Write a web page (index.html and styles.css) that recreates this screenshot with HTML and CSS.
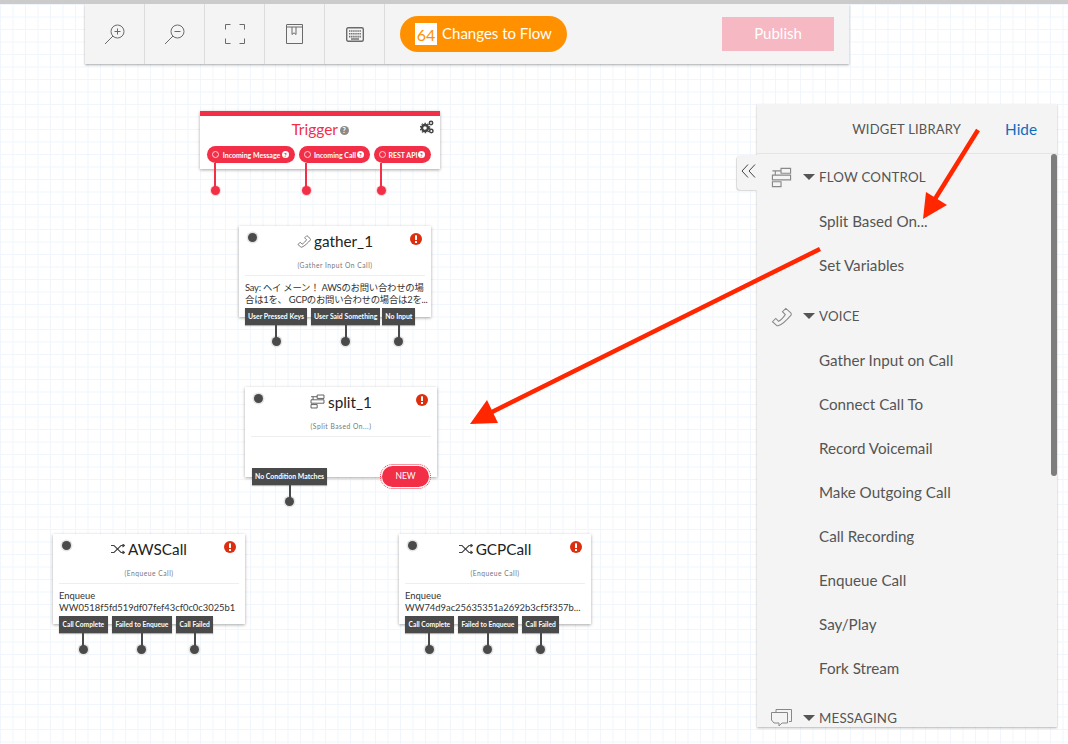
FILE: index.html
```html
<!DOCTYPE html>
<html lang="en">
<head>
<meta charset="utf-8">
<title>Studio Flow</title>
<link rel="stylesheet" href="styles.css">
</head>
<body>
<svg width="0" height="0" class="defs">
  <symbol id="i-split" viewBox="0 0 22 22"><path d="M10.500 1.500h10v5h-10zM1.500 8.500h19v5h-19zM1.500 15.500h9v5h-9zM1.500 4h9M4.500 4v4.500" fill="none" stroke="currentColor" stroke-width="1.200"/></symbol>
  <symbol id="i-phone" viewBox="0 0 22 22"><path d="M1.500 16.500l3.500-3.500 3 3c2-1 6-5 7-7l-3-3 3.500-3.500 5 4.500c1 1 1 1.500.5 2.500C18 13 12 19 8 20.500c-1 .5-1.500.5-2.500-.5z" fill="none" stroke="currentColor" stroke-width="1.100"/></symbol>
  <symbol id="i-shuffle" viewBox="0 0 14 10"><path d="M0 1.500h3l7 7h3M0 8.500h3l7-7h3M11.500 0l2 1.500-2 1.500M11.500 7l2 1.500-2 1.500" fill="none" stroke="currentColor" stroke-width="1.100"/></symbol>
  <symbol id="i-alert" viewBox="0 0 12 12"><circle cx="6" cy="6" r="6" fill="#dd2e0e"/><rect x="5" y="2.300" width="2" height="4.700" fill="#fff"/><rect x="5" y="8" width="2" height="2" fill="#fff"/></symbol>
</svg>

<main class="canvas">
  <header class="toolbar">
    <div class="tool">
      <svg width="22" height="22" viewBox="0 0 22 22" class="tool-icon"><circle cx="13.500" cy="8.500" r="6.500"/><path d="M9 13L1 21M10.500 8.500h6M13.500 5.500v6"/></svg>
    </div>
    <div class="tool">
      <svg width="22" height="22" viewBox="0 0 22 22" class="tool-icon"><circle cx="13.500" cy="8.500" r="6.500"/><path d="M9 13L1 21M10.500 8.500h6"/></svg>
    </div>
    <div class="tool">
      <svg width="20" height="20" viewBox="0 0 20 20" class="tool-icon"><path d="M.5 5.500v-5h5M14.500.5h5v5M.5 14.500v5h5M14.500 19.500h5v-5"/></svg>
    </div>
    <div class="tool">
      <svg width="17" height="20" viewBox="0 0 17 20" class="tool-icon"><path d="M.5 3v16.500h16V3zM.5 3V1q0-.5.5-.5h15.500V3M10 3v7.500l-2-1.700-2 1.700V3"/></svg>
    </div>
    <div class="tool">
      <svg width="18" height="15" viewBox="0 0 18 15" class="tool-icon"><rect x=".7" y=".7" width="16.600" height="13.600" rx="1.500" stroke-width="1.400"/><path class="keys" d="M3 4h12M3 6.800h12M3 9.600h12" stroke-width="1.600" stroke-dasharray="1.400 .7"/><path d="M5 12h8" stroke-width="1.400"/></svg>
    </div>
    <div class="toolbar-actions">
      <button class="changes"><span class="changes-count">64</span>Changes to Flow</button>
      <button class="publish">Publish</button>
    </div>
  </header>

  <section class="node node-trigger">
    <h2 class="trigger-title">Trigger <span class="help help-title">?</span></h2>
    <svg class="gears" width="14" height="14" viewBox="0 0 14 14"><circle cx="5" cy="8" r="3" fill="none" stroke="#444" stroke-width="2.400"/><circle cx="5" cy="8" r="4.700" fill="none" stroke="#444" stroke-width="1.300" stroke-dasharray="1.500 1.500"/><circle cx="11" cy="3" r="1.700" fill="none" stroke="#444" stroke-width="1.500"/><circle cx="11.300" cy="11" r="1.700" fill="none" stroke="#444" stroke-width="1.500"/></svg>
    <div class="pills">
      <div class="pill pill-a"><i class="ring"></i>Incoming Message <span class="help">?</span></div>
      <div class="pill pill-b"><i class="ring"></i>Incoming Call <span class="help">?</span></div>
      <div class="pill pill-c"><i class="ring"></i>REST API <span class="help">?</span></div>
    </div>
  </section>

  <section class="node widget node-gather">
    <i class="in-dot"></i>
    <svg class="alert" width="12" height="12"><use href="#i-alert"/></svg>
    <h3 class="widget-title"><svg class="title-icon" width="14" height="14"><use href="#i-phone"/></svg>gather_1</h3>
    <p class="widget-sub">(Gather Input On Call)</p>
    <p class="widget-body widget-body-ja">Say: ヘイ メーン！ AWSのお問い合わせの場<br>合は1を、 GCPのお問い合わせの場合は2を...</p>
    <div class="ports ports-gather">
      <span class="port">User Pressed Keys</span>
      <span class="port">User Said Something</span>
      <span class="port">No Input</span>
    </div>
  </section>

  <section class="node widget node-split">
    <i class="in-dot"></i>
    <svg class="alert" width="12" height="12"><use href="#i-alert"/></svg>
    <h3 class="widget-title"><svg class="title-icon" width="15" height="15"><use href="#i-split"/></svg>split_1</h3>
    <p class="widget-sub">(Split Based On...)</p>
    <div class="ports">
      <span class="port">No Condition Matches</span>
    </div>
    <span class="new-btn">NEW</span>
  </section>

  <section class="node widget node-aws">
    <i class="in-dot"></i>
    <svg class="alert" width="12" height="12"><use href="#i-alert"/></svg>
    <h3 class="widget-title"><svg class="title-icon" width="14" height="10"><use href="#i-shuffle"/></svg>AWSCall</h3>
    <p class="widget-sub">(Enqueue Call)</p>
    <p class="widget-body">Enqueue<br>WW0518f5fd519df07fef43cf0c0c3025b1</p>
    <div class="ports">
      <span class="port">Call Complete</span>
      <span class="port">Failed to Enqueue</span>
      <span class="port">Call Failed</span>
    </div>
  </section>

  <section class="node widget node-gcp">
    <i class="in-dot"></i>
    <svg class="alert" width="12" height="12"><use href="#i-alert"/></svg>
    <h3 class="widget-title"><svg class="title-icon" width="14" height="10"><use href="#i-shuffle"/></svg>GCPCall</h3>
    <p class="widget-sub">(Enqueue Call)</p>
    <p class="widget-body">Enqueue<br>WW74d9ac25635351a2692b3cf5f357b...</p>
    <div class="ports">
      <span class="port">Call Complete</span>
      <span class="port">Failed to Enqueue</span>
      <span class="port">Call Failed</span>
    </div>
  </section>

  <aside class="library">
    <button class="collapse">
      <svg width="15" height="14" viewBox="0 0 15 14" fill="none" stroke="#444" stroke-width="1"><path d="M7 .5L1 7l6 6.500M14 .5L8 7l6 6.500"/></svg>
    </button>
    <div class="library-head">
      <span class="library-title">WIDGET LIBRARY</span>
      <a class="hide-link">Hide</a>
    </div>
    <div class="library-body">
      <div class="group-row">
        <svg class="group-icon" width="21" height="21"><use href="#i-split"/></svg>
        <i class="caret"></i><span>FLOW CONTROL</span>
      </div>
      <div class="item">Split Based On...</div>
      <div class="item">Set Variables</div>
      <div class="group-row group-next">
        <svg class="group-icon" width="21" height="21"><use href="#i-phone"/></svg>
        <i class="caret"></i><span>VOICE</span>
      </div>
      <div class="item">Gather Input on Call</div>
      <div class="item">Connect Call To</div>
      <div class="item">Record Voicemail</div>
      <div class="item">Make Outgoing Call</div>
      <div class="item">Call Recording</div>
      <div class="item">Enqueue Call</div>
      <div class="item">Say/Play</div>
      <div class="item">Fork Stream</div>
      <div class="group-row group-next group-last">
        <svg class="group-icon" width="21" height="18" viewBox="0 0 21 18" fill="none" stroke="currentColor"><path d="M5 3V.5h15.500v12H18M.5 3.500h16v10.500H11l-3 3v-3H3L.5 11z"/></svg>
        <i class="caret"></i><span>MESSAGING</span>
      </div>
    </div>
    <div class="scrollbar"></div>
  </aside>

  <svg class="annotations" width="1068" height="744" viewBox="0 0 1068 744">
    <path d="M978 130L935 199" stroke="#ff2600" stroke-width="4.500" fill="none"/>
    <path d="M923 219L926 192L947 205Z" fill="#ff2600"/>
    <path d="M820 249L492 412" stroke="#ff2600" stroke-width="4.500" fill="none"/>
    <path d="M470 424L487 400L498 423Z" fill="#ff2600"/>
  </svg>
</main>
</body>
</html>
```
FILE: styles.css
```css
* { box-sizing: border-box; }
html, body { margin: 0; padding: 0; }
body { font-family: "Lato", "Noto Sans CJK JP", sans-serif; overflow: hidden; }
.defs { position: absolute; }

.canvas {
  position: relative;
  width: 1068px;
  height: 744px;
  overflow: hidden;
  background-color: #fff;
  background-image:
    linear-gradient(#f0f6fb 1px, transparent 1px),
    linear-gradient(90deg, #f0f6fb 1px, transparent 1px);
  background-size: 12.500px 12.500px;
  border-top: 4px solid #cbcbcb;
}

/* Toolbar */
.toolbar {
  position: absolute;
  left: 85px;
  top: 0;
  width: 764px;
  height: 60px;
  display: flex;
  background: #f4f4f4;
  box-shadow: 0 1px 2px rgba(0,0,0,.35);
}
.tool {
  width: 60px;
  display: flex;
  align-items: center;
  justify-content: center;
  border-right: 1px solid #dcdcdc;
}
.tool-icon { fill: none; stroke: #6a6a6a; stroke-width: 1; }
.toolbar-actions {
  flex: 1;
  display: flex;
  align-items: center;
  justify-content: space-between;
  padding: 0 15px;
}
.changes {
  width: 167px;
  height: 36px;
  border: 0;
  border-radius: 18px;
  background: #ff9100;
  color: #fff;
  font: 15px "Lato", sans-serif;
  display: flex;
  align-items: center;
  gap: 5px;
  padding: 0 0 2px 15px;
}
.changes-count {
  width: 22px;
  height: 22px;
  margin-top: 2px;
  background: #fff;
  color: #ff9100;
  font-size: 16px;
  display: flex;
  align-items: center;
  justify-content: center;
}
.publish {
  width: 112px;
  height: 34px;
  padding: 0 0 2px;
  border: 0;
  background: #f6b8c3;
  color: #fff;
  font: 15px "Lato", sans-serif;
}

/* Nodes */
.node {
  position: absolute;
  background: #fff;
  box-shadow: 0 1px 3px rgba(0,0,0,.35);
}
.node-trigger { left: 200px; top: 107px; width: 240px; height: 58px; border-top: 5px solid #f22f46; text-align: center; }
.node-gather { left: 239px; top: 222px; height: 91px; }
.node-split { left: 245px; top: 383px; height: 90px; width: 193px; }
.node-aws { left: 53px; top: 530px; height: 90px; }
.node-gcp { left: 399px; top: 530px; height: 90px; width: 193px; }

.trigger-title {
  margin: 4px 0 0;
  font-size: 15.500px;
  font-weight: 400;
  line-height: 18px;
  color: #f22f46;
}
.help {
  display: inline-block;
  width: 7px;
  height: 7px;
  border-radius: 50%;
  background: #fff;
  color: #f22f46;
  font-size: 6px;
  font-weight: 900;
  line-height: 7px;
  text-align: center;
  vertical-align: 1px;
}
.help-title { width: 9px; height: 9px; margin-left: -2px; background: #8a8a8a; color: #fff; font-size: 7px; line-height: 9px; vertical-align: 2px; }
.gears { position: absolute; right: 6px; top: 4px; }
.pills { position: absolute; left: 0; top: 30px; width: 100%; height: 17px; }
.pill {
  position: absolute;
  top: 0;
  height: 17px;
  display: flex;
  align-items: center;
  justify-content: space-between;
  padding: 0 5px 0 5px;
  background: #f22f46;
  border-radius: 9px;
  color: #fff;
  font-size: 7px;
  font-weight: 700;
  white-space: nowrap;
}
.pill::after {
  content: "";
  position: absolute;
  left: 7px;
  top: 17px;
  width: 2px;
  height: 24px;
  background: #f22f46;
}
.pill::before {
  content: "";
  position: absolute;
  left: 3.500px;
  top: 40px;
  width: 9px;
  height: 9px;
  border-radius: 50%;
  background: #f22f46;
  box-shadow: 0 0 0 1px #fbd5da;
}
.pill-b::after { left: 6px; }
.pill-b::before { left: 2.500px; }
.pill-c::after { left: 6px; }
.pill-c::before { left: 2.500px; }
.ring { width: 7px; height: 7px; border: 1px solid #fbd5da; border-radius: 50%; margin-right: 2px; }
.pill-a { left: 7px; width: 88px; padding-right: 6px; padding-left: 5px; }
.pill-b { left: 99px; width: 71px; padding-right: 6px; }
.pill-c { left: 174px; width: 57px; padding-right: 6px; }

.widget { width: 192px; padding: 0 6px; text-align: center; }
.in-dot {
  position: absolute;
  left: 9px;
  top: 7px;
  width: 9px;
  height: 9px;
  border-radius: 50%;
  background: #4a4a4a;
  box-shadow: 0 0 0 1.500px #e4e4e4;
}
.alert { position: absolute; right: 9px; top: 7px; }
.widget-title {
  margin: 0;
  height: 30px;
  padding-bottom: 1px;
  font-size: 15.300px;
  font-weight: 400;
  line-height: 28px;
  color: #222;
  display: flex;
  align-items: center;
  justify-content: center;
  gap: 3px;
}
.title-icon { color: #444; }
.widget-sub {
  margin: 0;
  height: 20px;
  padding-top: 4px;
  font-size: 6.700px;
  line-height: 10px;
  letter-spacing: .5px;
  color: #777;
  border-bottom: 1px solid #eee;
}
.widget-body {
  margin: 0;
  padding-top: 6px;
  font-size: 9.400px;
  line-height: 12px;
  text-align: left;
  color: #333;
  white-space: nowrap;
}
.widget-body-ja { letter-spacing: -.25px; }
.ports {
  position: absolute;
  left: 6px;
  top: 82px;
  display: flex;
  gap: 4px;
}
.ports-gather .port + .port + .port { margin-left: -2px; }
.node-split .ports { left: 7px; top: 81px; }
.port {
  position: relative;
  display: block;
  height: 17px;
  padding: 0 3px;
  background: #4a4a4a;
  box-shadow: 0 1px 1px rgba(0,0,0,.3);
  color: #fff;
  font-size: 6.900px;
  font-weight: 700;
  line-height: 17px;
  white-space: nowrap;
}
.port::after {
  content: "";
  position: absolute;
  left: calc(50% - 1px);
  top: 17px;
  width: 2px;
  height: 15px;
  background: #4a4a4a;
}
.port::before {
  content: "";
  position: absolute;
  left: calc(50% - 4.500px);
  top: 29px;
  width: 9px;
  height: 9px;
  border-radius: 50%;
  background: #4a4a4a;
  box-shadow: 0 0 0 1.500px #e4e4e4;
}
.node-aws .port, .node-gcp .port { font-size: 6.700px; padding: 0 3.600px; }
.new-btn {
  position: absolute;
  left: 137px;
  top: 79px;
  width: 47px;
  height: 21px;
  border-radius: 11px;
  background: #f22f46;
  color: #fff;
  font-size: 8.500px;
  line-height: 21px;
  text-align: center;
  outline: 1px dotted #f22f46;
  outline-offset: 1px;
}

/* Widget library */
.library {
  position: absolute;
  left: 757px;
  top: 100px;
  width: 300px;
  height: 623px;
  background: #f4f4f4;
  box-shadow: 0 1px 2px rgba(0,0,0,.3);
}
.library-head {
  height: 50px;
  display: flex;
  align-items: center;
  justify-content: flex-end;
  gap: 44px;
  padding: 0 20px 0 0;
  border-bottom: 1px solid #e4e4e4;
}
.library-title { font-size: 13px; color: #555; letter-spacing: .2px; }
.hide-link { font-size: 15.300px; color: #0a6ebd; }
.library-body { position: relative; height: 573px; overflow: hidden; padding-top: 11px; color: #555; }
.collapse {
  position: absolute;
  left: -20px;
  top: 51px;
  width: 20px;
  height: 35px;
  padding: 0 0 0 2px;
  border: 0;
  border-radius: 4px 0 0 4px;
  background: #f4f4f4;
  box-shadow: -1px 1px 1px rgba(0,0,0,.15);
}
.group-row {
  height: 24px;
  display: flex;
  align-items: center;
  font-size: 13.300px;
  letter-spacing: .2px;
}
.group-next { margin-top: 16px; }
.group-last { margin-top: 15px; }
.group-icon { margin-left: 14px; margin-right: 11px; color: #888; flex: none; }
.caret {
  width: 0;
  height: 0;
  border: 6px solid transparent;
  border-top: 6px solid #555;
  border-bottom: 0;
  margin-right: 4px;
}
.item {
  height: 44px;
  display: flex;
  align-items: center;
  padding-left: 62px;
  padding-bottom: 3px;
  font-size: 15.200px;
  color: #555;
}
.group-row + .item { margin-top: 11px; }
.scrollbar {
  position: absolute;
  left: 294px;
  top: 50px;
  width: 6px;
  height: 322px;
  border-radius: 3px;
  background: #7d7d7d;
}

.annotations { position: absolute; left: 0; top: -4px; pointer-events: none; }
```
